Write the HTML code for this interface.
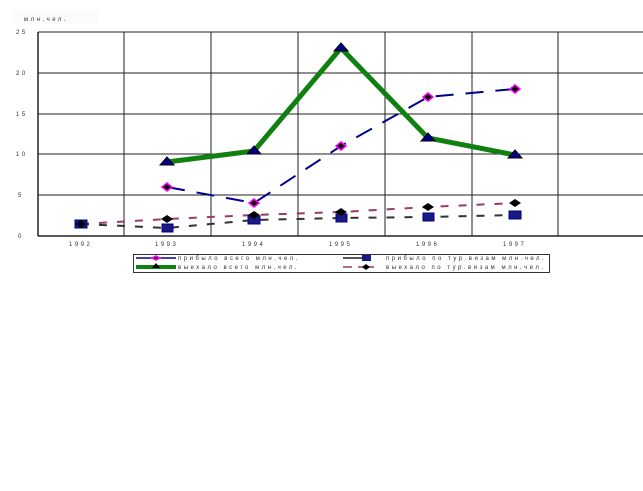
<!DOCTYPE html>
<html><head><meta charset="utf-8"><style>
body{margin:0;background:#fff;width:643px;height:486px;overflow:hidden}
text{font-family:"Liberation Sans",sans-serif;font-size:6px;fill:#333;letter-spacing:2.5px}
</style></head><body>
<svg width="643" height="486" xmlns="http://www.w3.org/2000/svg">
<rect x="12" y="10" width="86" height="14" fill="#fbfbfb"/>
<text x="24" y="21" style="font-size:6px">млн.чел.</text>
<g stroke="#222" stroke-width="1">
<line x1="38" y1="32" x2="643" y2="32"/>
<line x1="38" y1="73" x2="643" y2="73"/>
<line x1="38" y1="114" x2="643" y2="114"/>
<line x1="38" y1="154" x2="643" y2="154"/>
<line x1="38" y1="195" x2="643" y2="195"/>
<line x1="124" y1="32" x2="124" y2="236"/>
<line x1="211" y1="32" x2="211" y2="236"/>
<line x1="298" y1="32" x2="298" y2="236"/>
<line x1="385" y1="32" x2="385" y2="236"/>
<line x1="472" y1="32" x2="472" y2="236"/>
<line x1="558" y1="32" x2="558" y2="236"/>
</g>
<line x1="38" y1="32" x2="38" y2="236" stroke="#222" stroke-width="1.5"/>
<line x1="38" y1="236" x2="643" y2="236" stroke="#222" stroke-width="1.5"/>
<g style="font-size:6px">
<text x="16" y="34">25</text><text x="16" y="75">20</text><text x="16" y="116">15</text>
<text x="16" y="156">10</text><text x="18" y="197">5</text><text x="18" y="238">0</text>
<text x="69" y="246">1992</text><text x="155" y="246">1993</text><text x="242" y="246">1994</text>
<text x="329" y="246">1995</text><text x="416" y="246">1996</text><text x="503" y="246">1997</text>
</g>
<polyline points="81,224 167,219 254,215 341,212 428,207 515,203" fill="none" stroke="#9a3a6a" stroke-width="2" stroke-dasharray="8,10"/>
<polyline points="81,224 167,228 254,220 341,218 428,217 515,215" fill="none" stroke="#333" stroke-width="2" stroke-dasharray="8,10"/>
<polyline points="167,187 254,203 341,146 428,97 515,89" fill="none" stroke="#00008b" stroke-width="2" stroke-dasharray="18,12"/>
<polyline points="167,162 254,151 341,48 428,138 515,155" fill="none" stroke="#108010" stroke-width="5"/>
<g fill="#1a1a80" stroke="#00008b">
<rect x="75" y="220" width="12" height="8"/><rect x="162" y="224" width="11" height="8"/><rect x="248" y="216" width="12" height="8"/>
<rect x="336" y="214" width="11" height="8"/><rect x="423" y="213" width="11" height="8"/><rect x="509" y="211" width="12" height="8"/>
</g>
<g fill="#000">
<path d="M81,220l5,4-5,4-5-4z"/><path d="M167,215l6,4-6,4-6-4z"/><path d="M254,211l6,4-6,4-6-4z"/>
<path d="M341,208l6,4-6,4-6-4z"/><path d="M428,203l6,4-6,4-6-4z"/><path d="M515,199l6,4-6,4-6-4z"/>
</g>
<g fill="#000" stroke="#ff00ff" stroke-width="1.5">
<path d="M167,183l5,4-5,4-5-4z"/><path d="M254,199l5,4-5,4-5-4z"/><path d="M341,142l5,4-5,4-5-4z"/>
<path d="M428,93l5,4-5,4-5-4z"/><path d="M515,85l5,4-5,4-5-4z"/>
</g>
<g fill="#00008b" stroke="#000">
<path d="M167,157l7,8h-14z"/><path d="M254,146l7,8h-14z"/><path d="M341,43l7,8h-14z"/>
<path d="M428,133l7,8h-14z"/><path d="M515,150l7,8h-14z"/>
</g>
<rect x="133.5" y="254.5" width="416" height="18" fill="#fff" stroke="#333"/>
<line x1="136" y1="258" x2="176" y2="258" stroke="#00008b" stroke-width="1.5"/>
<path d="M156,256l4,2-4,2-4-2z" fill="#000" stroke="#f0f" stroke-width="1.5"/>
<text x="178" y="260">прибыло всего млн.чел.</text>
<line x1="136" y1="267" x2="176" y2="267" stroke="#108010" stroke-width="4"/>
<path d="M156,263l4,5h-8z" fill="#000"/>
<text x="178" y="269">выехало всего млн.чел.</text>
<line x1="343" y1="258" x2="370" y2="258" stroke="#222" stroke-width="1.5"/>
<rect x="362" y="255" width="9" height="6" fill="#1a1a80"/>
<text x="386" y="260">прибыло по тур.визам млн.чел.</text>
<line x1="343" y1="267" x2="352" y2="267" stroke="#9a3a6a" stroke-width="1.5"/>
<line x1="358" y1="267" x2="374" y2="267" stroke="#9a3a6a" stroke-width="1.5"/>
<path d="M366,264l4,3-4,3-4-3z" fill="#000"/>
<text x="386" y="269">выехало по тур.визам млн.чел.</text>
</svg>
</body></html>
